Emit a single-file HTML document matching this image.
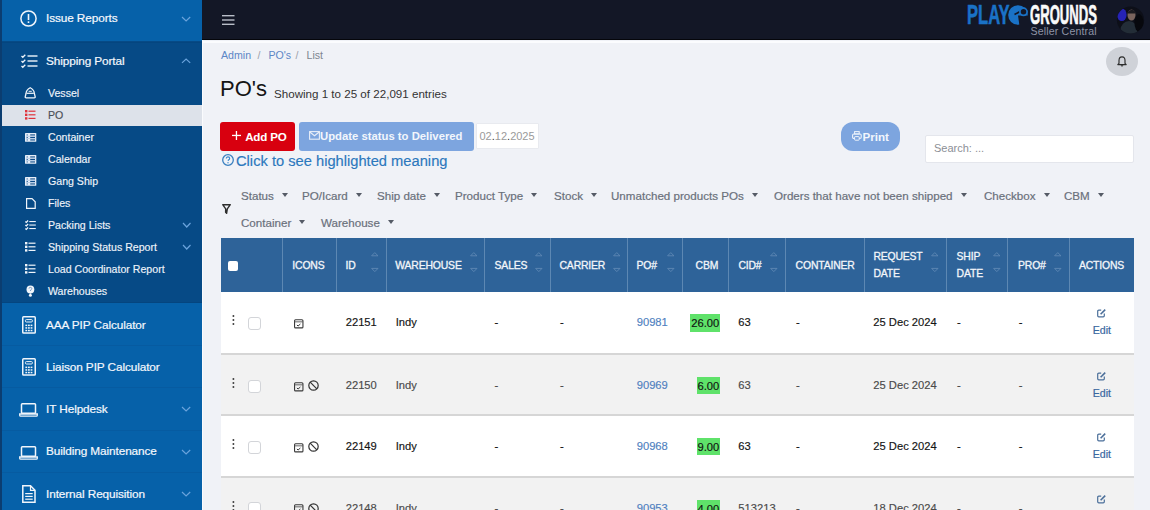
<!DOCTYPE html><html><head><meta charset="utf-8"><style>
*{box-sizing:border-box;margin:0;padding:0}
html,body{width:1150px;height:510px;overflow:hidden;background:#f0f2f7;font-family:"Liberation Sans",sans-serif}
body{position:relative}
.a{position:absolute;white-space:nowrap}
svg{position:absolute;overflow:visible}
.mi{position:absolute;left:46px;color:#f4f8fd;font-size:11.8px;line-height:14px;white-space:nowrap;letter-spacing:-0.1px;-webkit-text-stroke:0.2px #f4f8fd}
.si{position:absolute;left:48px;color:#f2f6fb;font-size:10.6px;line-height:12px;white-space:nowrap;-webkit-text-stroke:0.15px currentColor}
.flt{position:absolute;font-size:11.6px;line-height:14px;color:#6a707b;white-space:nowrap;-webkit-text-stroke:0.2px #6a707b}
.caret{display:inline-block;width:0;height:0;border-left:3px solid transparent;border-right:3px solid transparent;border-top:4px solid #555b66;vertical-align:3px;margin-left:8px}
.hc{position:absolute;color:#f3f6fa;font-size:10.4px;line-height:17.6px;white-space:nowrap;letter-spacing:-0.15px;-webkit-text-stroke:0.3px #f3f6fa}
.row{position:absolute;left:221px;width:913px;height:62px;border-bottom:2px solid #d9d9d9}
.c{position:absolute;font-size:11.2px;color:#1f1f1f;line-height:14px;white-space:nowrap;-webkit-text-stroke:0.15px currentColor}
.lnk{color:#4f7fc0}
</style></head><body>
<div class="a" style="left:0;top:0;width:202px;height:510px;background:#0661a9"></div>
<div class="a" style="left:0;top:40.5px;width:202px;height:262.5px;background:#064a86"></div>
<div class="a" style="left:0;top:41.5px;width:202px;height:1px;background:#04457f"></div>
<div class="a" style="left:0;top:302px;width:202px;height:1px;background:#04457f"></div>
<div class="a" style="left:0;top:0;width:2px;height:510px;background:#0b3d70"></div>
<div class="a" style="left:2px;top:345px;width:200px;height:1px;background:#065ba1"></div>
<div class="a" style="left:2px;top:387px;width:200px;height:1px;background:#065ba1"></div>
<div class="a" style="left:2px;top:430px;width:200px;height:1px;background:#065ba1"></div>
<div class="a" style="left:2px;top:472px;width:200px;height:1px;background:#065ba1"></div>
<div class="a" style="left:2px;top:104.8px;width:200px;height:21.4px;background:#dde2ea"></div>
<div class="a" style="left:202px;top:40px;width:1.3px;height:470px;background:#fafbfd"></div>
<div class="mi" style="top:10.8px">Issue Reports</div>
<div class="mi" style="top:53.6px">Shipping Portal</div>
<div class="mi" style="top:317.5px">AAA PIP Calculator</div>
<div class="mi" style="top:359.5px">Liaison PIP Calculator</div>
<div class="mi" style="top:401.8px">IT Helpdesk</div>
<div class="mi" style="top:444.3px">Building Maintenance</div>
<div class="mi" style="top:486.8px">Internal Requisition</div>
<svg style="left:182px;top:16.6px" width="8.2" height="3.9"><polyline points="0,0 4.1,3.9 8.2,0" fill="none" stroke="#6aa3dc" stroke-width="1.2"/></svg>
<svg style="left:182px;top:59px" width="8.2" height="3.9"><polyline points="0,3.9 4.1,0 8.2,3.9" fill="none" stroke="#6aa3dc" stroke-width="1.2"/></svg>
<svg style="left:182px;top:407px" width="8.2" height="3.9"><polyline points="0,0 4.1,3.9 8.2,0" fill="none" stroke="#6aa3dc" stroke-width="1.2"/></svg>
<svg style="left:182px;top:450px" width="8.2" height="3.9"><polyline points="0,0 4.1,3.9 8.2,0" fill="none" stroke="#6aa3dc" stroke-width="1.2"/></svg>
<svg style="left:182px;top:492px" width="8.2" height="3.9"><polyline points="0,0 4.1,3.9 8.2,0" fill="none" stroke="#6aa3dc" stroke-width="1.2"/></svg>
<svg style="left:183.3px;top:222.8px" width="7.5" height="4"><polyline points="0,0 3.75,4 7.5,0" fill="none" stroke="#6aa3dc" stroke-width="1.2"/></svg>
<svg style="left:183.3px;top:245px" width="7.5" height="4"><polyline points="0,0 3.75,4 7.5,0" fill="none" stroke="#6aa3dc" stroke-width="1.2"/></svg>
<div class="si" style="top:86.5px;color:#eef3fa">Vessel</div>
<div class="si" style="top:108.5px;color:#4a4f57">PO</div>
<div class="si" style="top:130.5px;color:#eef3fa">Container</div>
<div class="si" style="top:152.5px;color:#eef3fa">Calendar</div>
<div class="si" style="top:174.5px;color:#eef3fa">Gang Ship</div>
<div class="si" style="top:196.5px;color:#eef3fa">Files</div>
<div class="si" style="top:218.5px;color:#eef3fa">Packing Lists</div>
<div class="si" style="top:240.5px;color:#eef3fa">Shipping Status Report</div>
<div class="si" style="top:262.5px;color:#eef3fa">Load Coordinator Report</div>
<div class="si" style="top:284.5px;color:#eef3fa">Warehouses</div>
<svg style="left:20px;top:10px" width="17" height="17"><circle cx="8.5" cy="8.5" r="7.6" fill="none" stroke="#f0f5fb" stroke-width="1.5"/><rect x="7.7" y="4" width="1.6" height="6" fill="#f0f5fb"/><rect x="7.7" y="11.3" width="1.6" height="1.7" fill="#f0f5fb"/></svg>
<svg style="left:21px;top:54px" width="17" height="15"><polyline points="0.5,2 1.8,3.3 4.3,0.8" fill="none" stroke="#f0f5fb" stroke-width="1.3"/><polyline points="0.5,7 1.8,8.3 4.3,5.8" fill="none" stroke="#f0f5fb" stroke-width="1.3"/><polyline points="0.5,12 1.8,13.3 4.3,10.8" fill="none" stroke="#f0f5fb" stroke-width="1.3"/><rect x="6.5" y="1.3" width="10" height="1.4" fill="#f0f5fb"/><rect x="6.5" y="6.3" width="10" height="1.4" fill="#f0f5fb"/><rect x="6.5" y="11.3" width="10" height="1.4" fill="#f0f5fb"/></svg>
<svg style="left:25px;top:86.6px" width="11" height="11.5"><path d="M5.2 0.8 Q9.2 3 9.3 6.2 L10.2 9.9 Q10.3 10.8 9.3 10.8 H1.1 Q0.1 10.8 0.2 9.9 L1.1 6.2 Q1.2 3 5.2 0.8 Z" fill="none" stroke="#f0f5fb" stroke-width="1.3"/><path d="M1.6 6.3 H8.8" stroke="#f0f5fb" stroke-width="1.2"/><path d="M3.6 4.3 H6.8" stroke="#f0f5fb" stroke-width="1"/></svg>
<svg style="left:25px;top:110px" width="11" height="10"><rect x="0" y="0" width="2.4" height="2.4" fill="#e0333c"/><rect x="0" y="3.6" width="2.4" height="2.4" fill="#e0333c"/><rect x="0" y="7.2" width="2.4" height="2.4" fill="#e0333c"/><rect x="3.5" y="0.6" width="7" height="1.2" fill="#e0333c"/><rect x="3.5" y="4.2" width="7" height="1.2" fill="#e0333c"/><rect x="3.5" y="7.8" width="7" height="1.2" fill="#e0333c"/></svg>
<svg style="left:24.6px;top:132.8px" width="11.3" height="8.8"><rect x="0" y="0" width="11.3" height="8.8" rx="0.6" fill="#e6eef8"/><rect x="5.2" y="1.4" width="4.8" height="1.1" fill="#0b4a87"/><rect x="5.2" y="3.9" width="4.8" height="1.1" fill="#0b4a87"/><rect x="5.2" y="6.4" width="4.8" height="1.1" fill="#0b4a87"/><rect x="1.6" y="1.5" width="1.2" height="0.9" fill="#0b4a87"/><rect x="1.6" y="4" width="1.2" height="0.9" fill="#0b4a87"/><rect x="1.6" y="6.5" width="1.2" height="0.9" fill="#0b4a87"/><rect x="0.9" y="2.9" width="9.5" height="0.5" fill="#8fb0d6"/><rect x="0.9" y="5.4" width="9.5" height="0.5" fill="#8fb0d6"/></svg>
<svg style="left:24.6px;top:154.9px" width="11.3" height="8.8"><rect x="0" y="0" width="11.3" height="8.8" rx="0.6" fill="#e6eef8"/><rect x="5.2" y="1.4" width="4.8" height="1.1" fill="#0b4a87"/><rect x="5.2" y="3.9" width="4.8" height="1.1" fill="#0b4a87"/><rect x="5.2" y="6.4" width="4.8" height="1.1" fill="#0b4a87"/><rect x="1.6" y="1.5" width="1.2" height="0.9" fill="#0b4a87"/><rect x="1.6" y="4" width="1.2" height="0.9" fill="#0b4a87"/><rect x="1.6" y="6.5" width="1.2" height="0.9" fill="#0b4a87"/><rect x="0.9" y="2.9" width="9.5" height="0.5" fill="#8fb0d6"/><rect x="0.9" y="5.4" width="9.5" height="0.5" fill="#8fb0d6"/></svg>
<svg style="left:24.6px;top:177px" width="11.3" height="8.8"><rect x="0" y="0" width="11.3" height="8.8" rx="0.6" fill="#e6eef8"/><rect x="5.2" y="1.4" width="4.8" height="1.1" fill="#0b4a87"/><rect x="5.2" y="3.9" width="4.8" height="1.1" fill="#0b4a87"/><rect x="5.2" y="6.4" width="4.8" height="1.1" fill="#0b4a87"/><rect x="1.6" y="1.5" width="1.2" height="0.9" fill="#0b4a87"/><rect x="1.6" y="4" width="1.2" height="0.9" fill="#0b4a87"/><rect x="1.6" y="6.5" width="1.2" height="0.9" fill="#0b4a87"/><rect x="0.9" y="2.9" width="9.5" height="0.5" fill="#8fb0d6"/><rect x="0.9" y="5.4" width="9.5" height="0.5" fill="#8fb0d6"/></svg>
<svg style="left:26px;top:198px" width="10" height="11"><path d="M0.6 0.6 H6 L9.2 3.8 V10.4 H0.6 Z" fill="none" stroke="#f0f5fb" stroke-width="1.2"/></svg>
<svg style="left:25px;top:220px" width="11" height="10"><polyline points="0.4,1.5 1.3,2.4 3.1,0.6" fill="none" stroke="#f0f5fb" stroke-width="1.35"/><polyline points="0.4,5 1.3,5.9 3.1,4.1" fill="none" stroke="#f0f5fb" stroke-width="1.35"/><polyline points="0.4,8.5 1.3,9.4 3.1,7.6" fill="none" stroke="#f0f5fb" stroke-width="1.35"/><rect x="4.3" y="1" width="6.5" height="1.1" fill="#f0f5fb"/><rect x="4.3" y="4.5" width="6.5" height="1.1" fill="#f0f5fb"/><rect x="4.3" y="8" width="6.5" height="1.1" fill="#f0f5fb"/></svg>
<svg style="left:25px;top:242px" width="11" height="10"><rect x="0" y="0" width="2.4" height="2.4" fill="#f0f5fb"/><rect x="0" y="3.6" width="2.4" height="2.4" fill="#f0f5fb"/><rect x="0" y="7.2" width="2.4" height="2.4" fill="#f0f5fb"/><rect x="3.5" y="0.6" width="7" height="1.2" fill="#f0f5fb"/><rect x="3.5" y="4.2" width="7" height="1.2" fill="#f0f5fb"/><rect x="3.5" y="7.8" width="7" height="1.2" fill="#f0f5fb"/></svg>
<svg style="left:25px;top:264px" width="11" height="10"><rect x="0" y="0" width="2.4" height="2.4" fill="#f0f5fb"/><rect x="0" y="3.6" width="2.4" height="2.4" fill="#f0f5fb"/><rect x="0" y="7.2" width="2.4" height="2.4" fill="#f0f5fb"/><rect x="3.5" y="0.6" width="7" height="1.2" fill="#f0f5fb"/><rect x="3.5" y="4.2" width="7" height="1.2" fill="#f0f5fb"/><rect x="3.5" y="7.8" width="7" height="1.2" fill="#f0f5fb"/></svg>
<svg style="left:26px;top:285px" width="9" height="12"><circle cx="4.4" cy="4.4" r="3.9" fill="#f0f5fb"/><rect x="3.6" y="7" width="1.6" height="1.6" fill="#f0f5fb"/><circle cx="4.4" cy="10.2" r="1.5" fill="#f0f5fb"/><path d="M3 3.6 Q3 2.4 4.4 2.4 Q5.8 2.4 5.8 3.6 Q5.8 4.4 4.6 5 L4.5 6" fill="none" stroke="#5d86b5" stroke-width="0.8"/></svg>
<svg style="left:22px;top:315.5px" width="14" height="18"><rect x="0.75" y="0.75" width="12.5" height="16.3" rx="0.9" fill="none" stroke="#f0f5fb" stroke-width="1.5"/><rect x="3.4" y="3.6" width="7" height="2.4" rx="1" fill="none" stroke="#f0f5fb" stroke-width="1"/><rect x="3.4" y="8.6" width="1.8" height="1.5" fill="#f0f5fb"/><rect x="3.4" y="11.2" width="1.8" height="1.5" fill="#f0f5fb"/><rect x="3.4" y="13.8" width="1.8" height="1.5" fill="#f0f5fb"/><rect x="6.0" y="8.6" width="1.8" height="1.5" fill="#f0f5fb"/><rect x="6.0" y="11.2" width="1.8" height="1.5" fill="#f0f5fb"/><rect x="6.0" y="13.8" width="1.8" height="1.5" fill="#f0f5fb"/><rect x="8.6" y="8.6" width="1.8" height="1.5" fill="#f0f5fb"/><rect x="8.6" y="11.2" width="1.8" height="1.5" fill="#f0f5fb"/><rect x="8.6" y="13.8" width="1.8" height="1.5" fill="#f0f5fb"/></svg>
<svg style="left:22px;top:357.8px" width="14" height="18"><rect x="0.75" y="0.75" width="12.5" height="16.3" rx="0.9" fill="none" stroke="#f0f5fb" stroke-width="1.5"/><rect x="3.4" y="3.6" width="7" height="2.4" rx="1" fill="none" stroke="#f0f5fb" stroke-width="1"/><rect x="3.4" y="8.6" width="1.8" height="1.5" fill="#f0f5fb"/><rect x="3.4" y="11.2" width="1.8" height="1.5" fill="#f0f5fb"/><rect x="3.4" y="13.8" width="1.8" height="1.5" fill="#f0f5fb"/><rect x="6.0" y="8.6" width="1.8" height="1.5" fill="#f0f5fb"/><rect x="6.0" y="11.2" width="1.8" height="1.5" fill="#f0f5fb"/><rect x="6.0" y="13.8" width="1.8" height="1.5" fill="#f0f5fb"/><rect x="8.6" y="8.6" width="1.8" height="1.5" fill="#f0f5fb"/><rect x="8.6" y="11.2" width="1.8" height="1.5" fill="#f0f5fb"/><rect x="8.6" y="13.8" width="1.8" height="1.5" fill="#f0f5fb"/></svg>
<svg style="left:19px;top:403px" width="19" height="14"><rect x="2.5" y="0.8" width="14" height="9.5" rx="0.8" fill="none" stroke="#f0f5fb" stroke-width="1.5"/><path d="M0.7 11 H18.3 V12.3 Q18.3 13.2 17.4 13.2 H1.6 Q0.7 13.2 0.7 12.3 Z" fill="none" stroke="#f0f5fb" stroke-width="1.3"/></svg>
<svg style="left:19px;top:445.5px" width="19" height="14"><rect x="2.5" y="0.8" width="14" height="9.5" rx="0.8" fill="none" stroke="#f0f5fb" stroke-width="1.5"/><path d="M0.7 11 H18.3 V12.3 Q18.3 13.2 17.4 13.2 H1.6 Q0.7 13.2 0.7 12.3 Z" fill="none" stroke="#f0f5fb" stroke-width="1.3"/></svg>
<svg style="left:22px;top:485px" width="14" height="18"><path d="M0.8 0.8 H8.5 L13 5.3 V17.2 H0.8 Z" fill="none" stroke="#f0f5fb" stroke-width="1.5"/><path d="M8.5 0.8 V5.3 H13" fill="none" stroke="#f0f5fb" stroke-width="1.2"/><rect x="3.2" y="8" width="7.5" height="1.2" fill="#f0f5fb"/><rect x="3.2" y="10.8" width="7.5" height="1.2" fill="#f0f5fb"/><rect x="3.2" y="13.6" width="7.5" height="1.2" fill="#f0f5fb"/></svg>
<div class="a" style="left:202px;top:0;width:948px;height:40px;background:#131726"></div>
<div class="a" style="left:202px;top:39px;width:948px;height:1.3px;background:#05060b"></div>
<div class="a" style="left:202px;top:41px;width:948px;height:1.5px;background:#fbfcfe"></div>
<svg style="left:222px;top:14px" width="13" height="12"><rect x="0" y="1" width="12.5" height="1.4" fill="#b9bec8"/><rect x="0" y="5.3" width="12.5" height="1.4" fill="#b9bec8"/><rect x="0" y="9.6" width="12.5" height="1.4" fill="#b9bec8"/></svg>
<div class="a" style="left:966.6px;top:0.6px;font-size:27.6px;line-height:27.6px;font-weight:bold;color:#1a72c6;transform:scaleX(0.6);transform-origin:left top;-webkit-text-stroke:0.6px #1a72c6">PLAY</div>
<svg style="left:1008px;top:5px" width="22" height="20"><circle cx="10" cy="10" r="9.8" fill="#1a72c6"/><path d="M10 10.5 L22 10.5 L22 21 L11.5 21 Z" fill="#131726"/><path d="M6.5 9.5 L13 6" stroke="#131726" stroke-width="1.7"/><circle cx="15.5" cy="6.8" r="3.6" fill="#131726" stroke="#1a72c6" stroke-width="1.7"/></svg>
<div class="a" style="left:1030px;top:0.6px;font-size:27.6px;line-height:27.6px;font-weight:bold;color:#fafafa;transform:scaleX(0.475);transform-origin:left top;-webkit-text-stroke:0.7px #fafafa">GROUNDS</div>
<div class="a" style="left:1030.5px;top:25.8px;font-size:10.6px;line-height:11px;color:#8e93a5;letter-spacing:0.15px">Seller Central</div>
<svg style="left:1116px;top:6px" width="29" height="28"><defs><clipPath id="av"><circle cx="14.5" cy="14" r="13.6"/></clipPath></defs><g clip-path="url(#av)"><rect width="29" height="28" fill="#0d0f18"/><ellipse cx="5.8" cy="8.8" rx="4.8" ry="6.3" fill="#2623b6"/><ellipse cx="13" cy="24" rx="8.5" ry="9" fill="#232d37"/><ellipse cx="15.5" cy="9" rx="4" ry="5.6" fill="#7a645d"/><path d="M11.3 6.5 Q15.5 1.5 19.8 6 L19.5 7.5 L11.6 7.5 Z" fill="#1a1a1f"/><ellipse cx="23" cy="17" rx="4.5" ry="9" fill="#07080d"/></g></svg>
<div class="a" style="left:1105.8px;top:46.6px;width:32.6px;height:29.8px;border-radius:50%;background:#cfd2d8"></div>
<svg style="left:1117px;top:55.5px" width="10" height="11"><path d="M5 0.8 C2.6 0.8 2 2.8 2 4.6 L2 7.3 L0.8 8.6 L9.2 8.6 L8 7.3 L8 4.6 C8 2.8 7.4 0.8 5 0.8 Z" fill="none" stroke="#2c2c2c" stroke-width="1.15" stroke-linejoin="round"/><path d="M3.8 9.5 Q5 10.8 6.2 9.5" fill="#2c2c2c" stroke="#2c2c2c" stroke-width="0.8"/></svg>
<div class="a" style="left:221px;top:48.5px;font-size:10.6px;line-height:12px;color:#5c86c6">Admin</div>
<div class="a" style="left:257.5px;top:48.5px;font-size:10.6px;line-height:12px;color:#9ba1aa">/</div>
<div class="a" style="left:268.5px;top:48.5px;font-size:10.6px;line-height:12px;color:#5c86c6">PO's</div>
<div class="a" style="left:295.5px;top:48.5px;font-size:10.6px;line-height:12px;color:#9ba1aa">/</div>
<div class="a" style="left:306.5px;top:48.5px;font-size:10.6px;line-height:12px;color:#7e858f">List</div>
<div class="a" style="left:220px;top:77.2px;font-size:22px;line-height:24px;color:#151515">PO's</div>
<div class="a" style="left:274px;top:87px;font-size:11.6px;line-height:13px;color:#333">Showing 1 to 25 of 22,091 entries</div>
<div class="a" style="left:220px;top:121.5px;width:74.7px;height:29.5px;background:#d8000f;border-radius:3px"></div>
<svg style="left:232px;top:131px" width="9" height="9"><rect x="3.8" y="0" width="1.3" height="9" fill="#fff"/><rect x="0" y="3.8" width="9" height="1.3" fill="#fff"/></svg>
<div class="a" style="left:245.2px;top:129.5px;font-size:11.6px;line-height:13px;font-weight:bold;color:#fff;letter-spacing:-0.2px">Add PO</div>
<div class="a" style="left:298.5px;top:121.5px;width:175px;height:29.5px;background:#7da5df;border-radius:3px"></div>
<svg style="left:309px;top:131px" width="11" height="9"><rect x="0.6" y="0.6" width="9.8" height="7.6" fill="none" stroke="#e8eef8" stroke-width="1.1"/><polyline points="0.8,1 5.5,4.8 10.2,1" fill="none" stroke="#e8eef8" stroke-width="1.1"/></svg>
<div class="a" style="left:320px;top:129.5px;font-size:11.3px;line-height:13px;font-weight:bold;color:#f2f6fc">Update status to Delivered</div>
<div class="a" style="left:476px;top:122.5px;width:62.5px;height:26px;background:#fff;border:1px solid #e8eaef;border-radius:1px"></div>
<div class="a" style="left:479.5px;top:129.5px;font-size:11px;line-height:13px;color:#9a9a9a">02<span style="color:#333">.</span>12<span style="color:#333">.</span>2025</div>
<svg style="left:222px;top:154px" width="12" height="12"><circle cx="6" cy="6" r="5.3" fill="none" stroke="#3a80c0" stroke-width="1.3"/><path d="M4.3 4.6 Q4.3 2.9 6 2.9 Q7.7 2.9 7.7 4.4 Q7.7 5.4 6.4 5.9 L6.2 7" fill="none" stroke="#3a88cc" stroke-width="1.1"/><circle cx="6" cy="8.7" r="0.7" fill="#3a88cc"/></svg>
<div class="a" style="left:236px;top:152.5px;font-size:14.7px;line-height:17px;color:#2c78bd;-webkit-text-stroke:0.15px #2c78bd">Click to see highlighted meaning</div>
<div class="a" style="left:840.8px;top:121.7px;width:59.3px;height:29.5px;background:#7da5df;border-radius:12px"></div>
<svg style="left:851.7px;top:131.2px" width="10" height="10"><rect x="2.6" y="0.6" width="4.6" height="2.4" fill="none" stroke="#eef3fb" stroke-width="1"/><rect x="0.6" y="3" width="8.6" height="4.4" rx="1.2" fill="none" stroke="#eef3fb" stroke-width="1.1"/><rect x="2.6" y="5.6" width="4.6" height="3.6" rx="0.6" fill="#7da5df" stroke="#eef3fb" stroke-width="1"/></svg>
<div class="a" style="left:862.5px;top:129.5px;font-size:11.6px;line-height:13px;font-weight:bold;color:#f2f6fc">Print</div>
<div class="a" style="left:924.5px;top:134.5px;width:209.5px;height:28px;background:#fff;border:1px solid #e4e6ec;border-radius:2px"></div>
<div class="a" style="left:934px;top:142px;font-size:11px;line-height:13px;color:#8c8f96">Search: ...</div>
<svg style="left:222px;top:204px" width="9" height="10"><path d="M0.7 0.7 H8.3 L5.3 4.8 L4.6 9.3 L3.6 8.3 L3.7 4.8 Z" fill="none" stroke="#2e2e2e" stroke-width="1.4" stroke-linejoin="round"/></svg>
<div class="flt" style="left:241px;top:189px">Status<span class="caret"></span></div>
<div class="flt" style="left:302px;top:189px">PO/Icard<span class="caret"></span></div>
<div class="flt" style="left:377px;top:189px">Ship date<span class="caret"></span></div>
<div class="flt" style="left:455px;top:189px">Product Type<span class="caret"></span></div>
<div class="flt" style="left:554px;top:189px">Stock<span class="caret"></span></div>
<div class="flt" style="left:611px;top:189px">Unmatched products POs<span class="caret"></span></div>
<div class="flt" style="left:774px;top:189px">Orders that have not been shipped<span class="caret"></span></div>
<div class="flt" style="left:984px;top:189px">Checkbox<span class="caret"></span></div>
<div class="flt" style="left:1064px;top:189px">CBM<span class="caret"></span></div>
<div class="flt" style="left:241px;top:215.5px">Container<span class="caret"></span></div>
<div class="flt" style="left:321px;top:215.5px">Warehouse<span class="caret"></span></div>
<div class="a" style="left:221px;top:238px;width:913px;height:54px;background:#2e6399"></div>
<div class="a" style="left:281.5px;top:238px;width:1px;height:54px;background:#5d88b3"></div>
<div class="a" style="left:335.5px;top:238px;width:1px;height:54px;background:#5d88b3"></div>
<div class="a" style="left:386px;top:238px;width:1px;height:54px;background:#5d88b3"></div>
<div class="a" style="left:484px;top:238px;width:1px;height:54px;background:#5d88b3"></div>
<div class="a" style="left:549.5px;top:238px;width:1px;height:54px;background:#5d88b3"></div>
<div class="a" style="left:626.8px;top:238px;width:1px;height:54px;background:#5d88b3"></div>
<div class="a" style="left:681.5px;top:238px;width:1px;height:54px;background:#5d88b3"></div>
<div class="a" style="left:728.2px;top:238px;width:1px;height:54px;background:#5d88b3"></div>
<div class="a" style="left:785.2px;top:238px;width:1px;height:54px;background:#5d88b3"></div>
<div class="a" style="left:863.8px;top:238px;width:1px;height:54px;background:#5d88b3"></div>
<div class="a" style="left:945.6px;top:238px;width:1px;height:54px;background:#5d88b3"></div>
<div class="a" style="left:1007.4px;top:238px;width:1px;height:54px;background:#5d88b3"></div>
<div class="a" style="left:1068.7px;top:238px;width:1px;height:54px;background:#5d88b3"></div>
<div class="a" style="left:228px;top:260.5px;width:10px;height:10px;background:#fff;border-radius:2px"></div>
<div class="hc" style="left:292.3px;top:256.5px">ICONS</div>
<div class="hc" style="left:345.5px;top:256.5px">ID</div>
<div class="hc" style="left:395.3px;top:256.5px">WAREHOUSE</div>
<div class="hc" style="left:494.6px;top:256.5px">SALES</div>
<div class="hc" style="left:559.5px;top:256.5px">CARRIER</div>
<div class="hc" style="left:636.5px;top:256.5px">PO#</div>
<div class="hc" style="left:695.6px;top:256.5px">CBM</div>
<div class="hc" style="left:738.4px;top:256.5px">CID#</div>
<div class="hc" style="left:795.6px;top:256.5px">CONTAINER</div>
<div class="hc" style="left:873.4px;top:247.8px">REQUEST<br>DATE</div>
<div class="hc" style="left:956.6px;top:247.8px">SHIP<br>DATE</div>
<div class="hc" style="left:1018px;top:256.5px">PRO#</div>
<div class="hc" style="left:1078.9px;top:256.5px">ACTIONS</div>
<svg style="left:371.3px;top:252px" width="8" height="21"><polygon points="0.6,3.8 3.8,0.6 7,3.8" fill="none" stroke="#5f88b4" stroke-width="0.9"/><polygon points="0.6,16.4 3.8,19.6 7,16.4" fill="none" stroke="#5f88b4" stroke-width="0.9"/></svg>
<svg style="left:469.8px;top:252px" width="8" height="21"><polygon points="0.6,3.8 3.8,0.6 7,3.8" fill="none" stroke="#5f88b4" stroke-width="0.9"/><polygon points="0.6,16.4 3.8,19.6 7,16.4" fill="none" stroke="#5f88b4" stroke-width="0.9"/></svg>
<svg style="left:535px;top:252px" width="8" height="21"><polygon points="0.6,3.8 3.8,0.6 7,3.8" fill="none" stroke="#5f88b4" stroke-width="0.9"/><polygon points="0.6,16.4 3.8,19.6 7,16.4" fill="none" stroke="#5f88b4" stroke-width="0.9"/></svg>
<svg style="left:612.5px;top:252px" width="8" height="21"><polygon points="0.6,3.8 3.8,0.6 7,3.8" fill="none" stroke="#5f88b4" stroke-width="0.9"/><polygon points="0.6,16.4 3.8,19.6 7,16.4" fill="none" stroke="#5f88b4" stroke-width="0.9"/></svg>
<svg style="left:666.8px;top:252px" width="8" height="21"><polygon points="0.6,3.8 3.8,0.6 7,3.8" fill="none" stroke="#5f88b4" stroke-width="0.9"/><polygon points="0.6,16.4 3.8,19.6 7,16.4" fill="none" stroke="#5f88b4" stroke-width="0.9"/></svg>
<svg style="left:770px;top:252px" width="8" height="21"><polygon points="0.6,3.8 3.8,0.6 7,3.8" fill="none" stroke="#5f88b4" stroke-width="0.9"/><polygon points="0.6,16.4 3.8,19.6 7,16.4" fill="none" stroke="#5f88b4" stroke-width="0.9"/></svg>
<svg style="left:930.5px;top:252px" width="8" height="21"><polygon points="0.6,3.8 3.8,0.6 7,3.8" fill="none" stroke="#5f88b4" stroke-width="0.9"/><polygon points="0.6,16.4 3.8,19.6 7,16.4" fill="none" stroke="#5f88b4" stroke-width="0.9"/></svg>
<svg style="left:993px;top:252px" width="8" height="21"><polygon points="0.6,3.8 3.8,0.6 7,3.8" fill="none" stroke="#5f88b4" stroke-width="0.9"/><polygon points="0.6,16.4 3.8,19.6 7,16.4" fill="none" stroke="#5f88b4" stroke-width="0.9"/></svg>
<svg style="left:1054px;top:252px" width="8" height="21"><polygon points="0.6,3.8 3.8,0.6 7,3.8" fill="none" stroke="#5f88b4" stroke-width="0.9"/><polygon points="0.6,16.4 3.8,19.6 7,16.4" fill="none" stroke="#5f88b4" stroke-width="0.9"/></svg>
<div class="a" style="left:221px;top:292px;width:913px;height:62px;background:#ffffff"></div>
<svg style="left:232px;top:315.2px" width="3" height="11"><circle cx="1.4" cy="1" r="0.95" fill="#3a3a3a"/><circle cx="1.4" cy="5" r="0.95" fill="#3a3a3a"/><circle cx="1.4" cy="9" r="0.95" fill="#3a3a3a"/></svg>
<div class="a" style="left:247.5px;top:316.8px;width:13px;height:13px;background:#fff;border:1px solid #d3d5d9;border-radius:3px"></div>
<svg style="left:294px;top:318.8px" width="9.5" height="9.5"><rect x="0.55" y="0.8" width="8.4" height="8.1" rx="1" fill="none" stroke="#3a3a3a" stroke-width="1.1"/><rect x="0.55" y="2.4" width="8.4" height="0.9" fill="#555"/><polyline points="2.9,6 4.1,7 6.4,5" fill="none" stroke="#333" stroke-width="1"/></svg>
<div class="c" style="left:345.7px;top:315px;color:#141414">22151</div>
<div class="c" style="left:395.7px;top:315px;color:#141414">Indy</div>
<div class="c" style="left:494.5px;top:315px;color:#141414">-</div>
<div class="c" style="left:560px;top:315px;color:#141414">-</div>
<div class="c lnk" style="left:636.7px;top:315px">90981</div>
<div class="c" style="right:430.20000000000005px;top:314px;height:17.5px;padding:2px 0.5px 0 1px;background:#5fe26a;color:#111">26.00</div>
<div class="c" style="left:738.3px;top:315px;color:#141414">63</div>
<div class="c" style="left:796px;top:315px;color:#141414">-</div>
<div class="c" style="left:873.3px;top:315px;color:#141414">25 Dec 2024</div>
<div class="c" style="left:957px;top:315px;color:#141414">-</div>
<div class="c" style="left:1018.7px;top:315px;color:#141414">-</div>
<svg style="left:1097px;top:309px" width="9" height="8.5"><path d="M4.2 1.2 H1.8 Q0.7 1.2 0.7 2.3 V6.8 Q0.7 7.8 1.8 7.8 H6.2 Q7.3 7.8 7.3 6.8 V4.6" fill="none" stroke="#4b6f9a" stroke-width="1.2"/><path d="M3.6 5.2 L8.2 0.6" stroke="#4b6f9a" stroke-width="1.6"/></svg>
<div class="c" style="left:1092.7px;top:323px;color:#3a67a0;font-size:10.6px;-webkit-text-stroke:0.2px #3a67a0">Edit</div>
<div class="a" style="left:221px;top:354.7px;width:913px;height:62px;background:#f2f2f2"></div>
<div class="a" style="left:221px;top:352.9px;width:913px;height:1.8px;background:#d6d6d6"></div>
<svg style="left:232px;top:377.9px" width="3" height="11"><circle cx="1.4" cy="1" r="0.95" fill="#3a3a3a"/><circle cx="1.4" cy="5" r="0.95" fill="#3a3a3a"/><circle cx="1.4" cy="9" r="0.95" fill="#3a3a3a"/></svg>
<div class="a" style="left:247.5px;top:379.5px;width:13px;height:13px;background:#fff;border:1px solid #d3d5d9;border-radius:3px"></div>
<svg style="left:294px;top:381.5px" width="9.5" height="9.5"><rect x="0.55" y="0.8" width="8.4" height="8.1" rx="1" fill="none" stroke="#3a3a3a" stroke-width="1.1"/><rect x="0.55" y="2.4" width="8.4" height="0.9" fill="#555"/><polyline points="2.9,6 4.1,7 6.4,5" fill="none" stroke="#333" stroke-width="1"/></svg>
<svg style="left:308px;top:380.2px" width="11" height="11"><circle cx="5.5" cy="5.5" r="4.7" fill="none" stroke="#333" stroke-width="1.2"/><line x1="2.2" y1="2.2" x2="8.8" y2="8.8" stroke="#333" stroke-width="1.2"/></svg>
<div class="c" style="left:345.7px;top:377.7px;color:#4a4a4a">22150</div>
<div class="c" style="left:395.7px;top:377.7px;color:#4a4a4a">Indy</div>
<div class="c" style="left:494.5px;top:377.7px;color:#4a4a4a">-</div>
<div class="c" style="left:560px;top:377.7px;color:#4a4a4a">-</div>
<div class="c lnk" style="left:636.7px;top:377.7px">90969</div>
<div class="c" style="right:430.20000000000005px;top:376.7px;height:17.5px;padding:2px 0.5px 0 1px;background:#5fe26a;color:#111">6.00</div>
<div class="c" style="left:738.3px;top:377.7px;color:#4a4a4a">63</div>
<div class="c" style="left:796px;top:377.7px;color:#4a4a4a">-</div>
<div class="c" style="left:873.3px;top:377.7px;color:#4a4a4a">25 Dec 2024</div>
<div class="c" style="left:957px;top:377.7px;color:#4a4a4a">-</div>
<div class="c" style="left:1018.7px;top:377.7px;color:#4a4a4a">-</div>
<svg style="left:1097px;top:371.7px" width="9" height="8.5"><path d="M4.2 1.2 H1.8 Q0.7 1.2 0.7 2.3 V6.8 Q0.7 7.8 1.8 7.8 H6.2 Q7.3 7.8 7.3 6.8 V4.6" fill="none" stroke="#4b6f9a" stroke-width="1.2"/><path d="M3.6 5.2 L8.2 0.6" stroke="#4b6f9a" stroke-width="1.6"/></svg>
<div class="c" style="left:1092.7px;top:385.7px;color:#3a67a0;font-size:10.6px;-webkit-text-stroke:0.2px #3a67a0">Edit</div>
<div class="a" style="left:221px;top:415.8px;width:913px;height:62px;background:#ffffff"></div>
<div class="a" style="left:221px;top:414.0px;width:913px;height:1.8px;background:#d6d6d6"></div>
<svg style="left:232px;top:439.0px" width="3" height="11"><circle cx="1.4" cy="1" r="0.95" fill="#3a3a3a"/><circle cx="1.4" cy="5" r="0.95" fill="#3a3a3a"/><circle cx="1.4" cy="9" r="0.95" fill="#3a3a3a"/></svg>
<div class="a" style="left:247.5px;top:440.6px;width:13px;height:13px;background:#fff;border:1px solid #d3d5d9;border-radius:3px"></div>
<svg style="left:294px;top:442.6px" width="9.5" height="9.5"><rect x="0.55" y="0.8" width="8.4" height="8.1" rx="1" fill="none" stroke="#3a3a3a" stroke-width="1.1"/><rect x="0.55" y="2.4" width="8.4" height="0.9" fill="#555"/><polyline points="2.9,6 4.1,7 6.4,5" fill="none" stroke="#333" stroke-width="1"/></svg>
<svg style="left:308px;top:441.3px" width="11" height="11"><circle cx="5.5" cy="5.5" r="4.7" fill="none" stroke="#333" stroke-width="1.2"/><line x1="2.2" y1="2.2" x2="8.8" y2="8.8" stroke="#333" stroke-width="1.2"/></svg>
<div class="c" style="left:345.7px;top:438.8px;color:#141414">22149</div>
<div class="c" style="left:395.7px;top:438.8px;color:#141414">Indy</div>
<div class="c" style="left:494.5px;top:438.8px;color:#141414">-</div>
<div class="c" style="left:560px;top:438.8px;color:#141414">-</div>
<div class="c lnk" style="left:636.7px;top:438.8px">90968</div>
<div class="c" style="right:430.20000000000005px;top:437.8px;height:17.5px;padding:2px 0.5px 0 1px;background:#5fe26a;color:#111">9.00</div>
<div class="c" style="left:738.3px;top:438.8px;color:#141414">63</div>
<div class="c" style="left:796px;top:438.8px;color:#141414">-</div>
<div class="c" style="left:873.3px;top:438.8px;color:#141414">25 Dec 2024</div>
<div class="c" style="left:957px;top:438.8px;color:#141414">-</div>
<div class="c" style="left:1018.7px;top:438.8px;color:#141414">-</div>
<svg style="left:1097px;top:432.8px" width="9" height="8.5"><path d="M4.2 1.2 H1.8 Q0.7 1.2 0.7 2.3 V6.8 Q0.7 7.8 1.8 7.8 H6.2 Q7.3 7.8 7.3 6.8 V4.6" fill="none" stroke="#4b6f9a" stroke-width="1.2"/><path d="M3.6 5.2 L8.2 0.6" stroke="#4b6f9a" stroke-width="1.6"/></svg>
<div class="c" style="left:1092.7px;top:446.8px;color:#3a67a0;font-size:10.6px;-webkit-text-stroke:0.2px #3a67a0">Edit</div>
<div class="a" style="left:221px;top:477.6px;width:913px;height:62px;background:#f2f2f2"></div>
<div class="a" style="left:221px;top:475.8px;width:913px;height:1.8px;background:#d6d6d6"></div>
<svg style="left:232px;top:500.8px" width="3" height="11"><circle cx="1.4" cy="1" r="0.95" fill="#3a3a3a"/><circle cx="1.4" cy="5" r="0.95" fill="#3a3a3a"/><circle cx="1.4" cy="9" r="0.95" fill="#3a3a3a"/></svg>
<div class="a" style="left:247.5px;top:502.40000000000003px;width:13px;height:13px;background:#fff;border:1px solid #d3d5d9;border-radius:3px"></div>
<svg style="left:294px;top:504.40000000000003px" width="9.5" height="9.5"><rect x="0.55" y="0.8" width="8.4" height="8.1" rx="1" fill="none" stroke="#3a3a3a" stroke-width="1.1"/><rect x="0.55" y="2.4" width="8.4" height="0.9" fill="#555"/><polyline points="2.9,6 4.1,7 6.4,5" fill="none" stroke="#333" stroke-width="1"/></svg>
<svg style="left:308px;top:503.1px" width="11" height="11"><circle cx="5.5" cy="5.5" r="4.7" fill="none" stroke="#333" stroke-width="1.2"/><line x1="2.2" y1="2.2" x2="8.8" y2="8.8" stroke="#333" stroke-width="1.2"/></svg>
<div class="c" style="left:345.7px;top:500.6px;color:#4a4a4a">22148</div>
<div class="c" style="left:395.7px;top:500.6px;color:#4a4a4a">Indy</div>
<div class="c" style="left:494.5px;top:500.6px;color:#4a4a4a">-</div>
<div class="c" style="left:560px;top:500.6px;color:#4a4a4a">-</div>
<div class="c lnk" style="left:636.7px;top:500.6px">90953</div>
<div class="c" style="right:430.20000000000005px;top:499.6px;height:17.5px;padding:2px 0.5px 0 1px;background:#5fe26a;color:#111">4.00</div>
<div class="c" style="left:738.3px;top:500.6px;color:#4a4a4a">513213</div>
<div class="c" style="left:796px;top:500.6px;color:#4a4a4a">-</div>
<div class="c" style="left:873.3px;top:500.6px;color:#4a4a4a">18 Dec 2024</div>
<div class="c" style="left:957px;top:500.6px;color:#4a4a4a">-</div>
<div class="c" style="left:1018.7px;top:500.6px;color:#4a4a4a">-</div>
<svg style="left:1097px;top:494.6px" width="9" height="8.5"><path d="M4.2 1.2 H1.8 Q0.7 1.2 0.7 2.3 V6.8 Q0.7 7.8 1.8 7.8 H6.2 Q7.3 7.8 7.3 6.8 V4.6" fill="none" stroke="#4b6f9a" stroke-width="1.2"/><path d="M3.6 5.2 L8.2 0.6" stroke="#4b6f9a" stroke-width="1.6"/></svg>
<div class="c" style="left:1092.7px;top:508.6px;color:#3a67a0;font-size:10.6px;-webkit-text-stroke:0.2px #3a67a0">Edit</div>
</body></html>
